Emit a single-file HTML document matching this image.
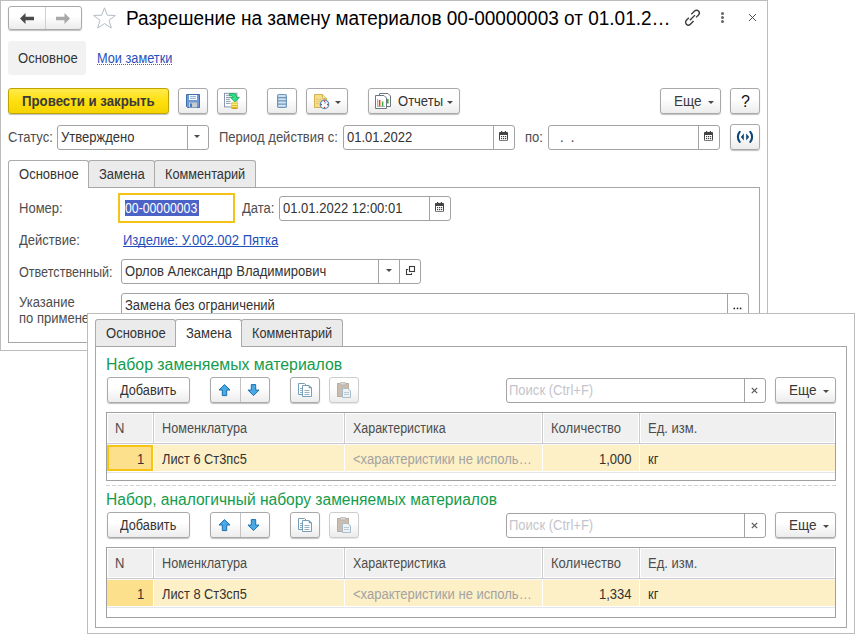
<!DOCTYPE html>
<html><head><meta charset="utf-8">
<style>
*{box-sizing:border-box;margin:0;padding:0}
html,body{width:859px;height:638px;overflow:hidden;background:#fff}
body{font-family:"Liberation Sans",sans-serif;font-size:13px;color:#4d4d4d;position:relative}
.a{position:absolute}
.win{position:absolute;background:#fff;border:1px solid #bcbcbc}
.t{position:absolute;white-space:nowrap;line-height:16px;font-size:14px;transform:scaleX(.93);transform-origin:0 0}
.btn{position:absolute;border:1px solid #a9a9a9;border-radius:3px;background:linear-gradient(#ffffff 40%,#ececec);box-shadow:0 1px 1px rgba(0,0,0,.25)}
.fld{position:absolute;border:1px solid #a3a3a3;border-radius:3px;background:#fff}
.vd{position:absolute;top:0;bottom:0;width:1px;background:#a3a3a3}
.tab{position:absolute;border:1px solid #ababab;border-bottom:none;border-radius:3px 3px 0 0;background:#ebebeb}
.tab.act{background:#fff}
.panel{position:absolute;border:1px solid #a6a6a6;background:#fff}
.arr{position:absolute;width:0;height:0;border-left:3px solid transparent;border-right:3px solid transparent;border-top:3px solid #4a4a4a}
.green{color:#139c4b;font-size:16px}
.th{position:absolute;top:0;height:30px;background:#f0f0f0;border-right:1px solid #dadada}
.tbl{position:absolute;border:1px solid #a0a0a0;background:#fff}
</style></head><body>

<!-- MAIN WINDOW -->
<div class="win" style="left:0;top:0;width:768px;height:351px"></div>

<!-- nav buttons -->
<div class="btn" style="left:8px;top:6px;width:74px;height:24px"></div>
<div class="a" style="left:45px;top:7px;width:1px;height:22px;background:#d0d0d0"></div>
<svg class="a" style="left:8px;top:6px" width="74" height="24" viewBox="0 0 74 24">
 <path d="M12 12.5 L17.5 7 L17.5 10.8 L26 10.8 L26 14.2 L17.5 14.2 L17.5 18 Z" fill="#4a4a4a"/>
 <path d="M62 12.5 L56.5 7 L56.5 10.8 L48 10.8 L48 14.2 L56.5 14.2 L56.5 18 Z" fill="#a8a8a8"/>
</svg>
<!-- star -->
<svg class="a" style="left:92px;top:6px" width="25" height="24" viewBox="0 0 25 24">
 <path d="M12.5 1.8 L15.3 9.2 L23.3 9.5 L17 14.3 L19.3 22 L12.5 17.6 L5.7 22 L8 14.3 L1.7 9.5 L9.7 9.2 Z" fill="none" stroke="#b4bcc4" stroke-width="1"/>
</svg>
<div class="t" style="left:126px;top:7px;font-size:20px;line-height:22px;color:#000;transform:scaleX(.95)">Разрешение на замену материалов 00-00000003 от 01.01.2…</div>
<!-- link icon -->
<svg class="a" style="left:683px;top:9px" width="20" height="19" viewBox="0 0 20 19">
 <g fill="none" stroke="#3c3c3c" stroke-width="1.6" transform="translate(9.45 8.6) scale(.87) translate(-9.45 -8.35)">
  <path d="M8.2 4.5 L11.9 0.8 A3.18 3.18 0 0 1 16.4 5.3 L13.6 8.1"/>
  <path d="M10.7 12.2 L7 15.9 A3.18 3.18 0 0 1 2.5 11.4 L5.3 8.6"/>
  <path d="M6.5 11.5 L12.3 5.5"/>
 </g>
</svg>
<!-- dots -->
<div class="a" style="left:721px;top:12px;width:3px;height:3px;background:#666;border-radius:50%"></div>
<div class="a" style="left:721px;top:16px;width:3px;height:3px;background:#666;border-radius:50%"></div>
<div class="a" style="left:721px;top:20px;width:3px;height:3px;background:#666;border-radius:50%"></div>
<!-- close -->
<svg class="a" style="left:748px;top:13px" width="9" height="9" viewBox="0 0 9 9">
 <path d="M1 1 L8 8 M8 1 L1 8" stroke="#505050" stroke-width="1"/>
</svg>

<!-- Основное / Мои заметки -->
<div class="a" style="left:8px;top:41px;width:78px;height:34px;background:#f2f2f2;border-radius:3px"></div>
<div class="t" style="left:18px;top:50px;color:#333">Основное</div>
<div class="t" style="left:97px;top:50px;color:#1f50bb;transform:scaleX(.91)">Мои заметки</div>
<div class="a" style="left:97px;top:64px;width:75px;height:1px;background:repeating-linear-gradient(90deg,#3a64c0 0 1px,transparent 1px 2px)"></div>

<!-- toolbar -->
<div class="a" style="left:8px;top:88px;width:161px;height:26px;border:1px solid #bfa300;border-radius:3px;background:linear-gradient(#ffea4c,#ffe00e 50%,#f4d300);box-shadow:0 1px 1px rgba(0,0,0,.25)"></div>
<div class="t" style="left:22px;top:93px;font-weight:bold;color:#3a3a3a;transform:scaleX(.945)">Провести и закрыть</div>

<div class="btn" style="left:178px;top:88px;width:30px;height:26px"></div>
<div class="btn" style="left:217px;top:88px;width:30px;height:26px"></div>
<div class="btn" style="left:267px;top:88px;width:30px;height:26px"></div>
<div class="btn" style="left:306px;top:88px;width:42px;height:26px"></div>
<div class="btn" style="left:368px;top:88px;width:92px;height:26px"></div>
<div class="t" style="left:398px;top:93px;color:#333">Отчеты</div>
<div class="arr" style="left:335px;top:101px"></div>
<div class="arr" style="left:447px;top:101px"></div>

<div class="btn" style="left:660px;top:88px;width:61px;height:26px"></div>
<div class="t" style="left:674px;top:93px;color:#3a3a3a;transform:scaleX(.97)">Еще</div>
<div class="arr" style="left:708px;top:101px"></div>
<div class="btn" style="left:730px;top:88px;width:30px;height:26px"></div>

<!-- status row -->
<div class="t" style="left:8px;top:129px">Статус:</div>
<div class="fld" style="left:57px;top:125px;width:152px;height:25px"><div class="vd" style="left:129px"></div></div>
<div class="t" style="left:61px;top:129px;color:#333">Утверждено</div>
<div class="arr" style="left:194px;top:135px"></div>

<div class="t" style="left:219px;top:129px">Период действия с:</div>
<div class="fld" style="left:343px;top:125px;width:172px;height:25px"><div class="vd" style="left:149px"></div></div>
<div class="t" style="left:347px;top:129px;color:#333">01.01.2022</div>
<div class="t" style="left:525px;top:129px">по:</div>
<div class="fld" style="left:548px;top:125px;width:172px;height:25px"><div class="vd" style="left:149px"></div></div>
<div class="t" style="left:560px;top:129px;color:#333">.&nbsp;&nbsp;.</div>
<div class="btn" style="left:730px;top:124px;width:30px;height:26px"></div>

<!-- main tabs -->
<div class="panel" style="left:8px;top:187px;width:752px;height:156px"></div>
<div class="tab" style="left:88px;top:160px;width:67px;height:27px"></div>
<div class="tab" style="left:154px;top:160px;width:102px;height:27px"></div>
<div class="tab act" style="left:8px;top:160px;width:81px;height:28px"></div>
<div class="t" style="left:19px;top:166px;color:#333">Основное</div>
<div class="t" style="left:99px;top:166px;color:#333">Замена</div>
<div class="t" style="left:165px;top:166px;color:#333;transform:scaleX(.91)">Комментарий</div>

<div class="t" style="left:19px;top:200px">Номер:</div>
<div class="a" style="left:118px;top:193px;width:117px;height:30px;border:2px solid #f5c21b"></div>
<div class="a" style="left:125px;top:200px;width:74px;height:16px;background:#4b63c6"></div>
<div class="t" style="left:125px;top:200px;color:#fff;transform:scaleX(.875)">00-00000003</div>
<div class="t" style="left:242px;top:200px">Дата:</div>
<div class="fld" style="left:279px;top:196px;width:172px;height:25px"><div class="vd" style="left:149px"></div></div>
<div class="t" style="left:283px;top:200px;color:#333">01.01.2022 12:00:01</div>

<div class="t" style="left:19px;top:232px">Действие:</div>
<div class="t" style="left:123px;top:232px;color:#1f50bb;text-decoration:underline;text-decoration-skip-ink:none">Изделие: У.002.002 Пятка</div>

<div class="t" style="left:19px;top:264px;transform:scaleX(.9)">Ответственный:</div>
<div class="fld" style="left:121px;top:259px;width:300px;height:25px"><div class="vd" style="left:256px"></div><div class="vd" style="left:277px"></div></div>
<div class="t" style="left:125px;top:263px;color:#333">Орлов Александр Владимирович</div>

<div class="t" style="left:19px;top:294px;line-height:16px">Указание<br>по применению:</div>
<div class="fld" style="left:121px;top:293px;width:628px;height:25px"><div class="vd" style="left:605px"></div></div>
<div class="t" style="left:125px;top:297px;color:#333">Замена без ограничений</div>


<!-- ICONS toolbar -->
<svg class="a" style="left:186px;top:94px" width="14" height="14" viewBox="0 0 14 14">
 <path d="M0.5 0.5 H13.5 V13.5 H1.5 L0.5 12.5 Z" fill="#6b9ad6" stroke="#3f6fae" stroke-width="1"/>
 <rect x="3" y="1" width="8" height="5" fill="#fff"/>
 <path d="M4 2.6 H10 M4 4.4 H10" stroke="#7ea6d8" stroke-width="0.9"/>
 <rect x="3" y="8.5" width="8" height="5" fill="#c8cccc"/>
 <rect x="4" y="9.5" width="2" height="3.5" fill="#4a7ab8"/>
</svg>
<svg class="a" style="left:220px;top:90px" width="24" height="22" viewBox="0 0 24 22">
 <rect x="4.5" y="3.3" width="12.4" height="13.6" fill="#fff" stroke="#8796ad"/>
 <path d="M6 5.3 H10.3 M6 7.4 H10 M6 9.3 H10 M6 11.4 H10.5 M6 13.4 H10.5" stroke="#8a98ae" stroke-width="1"/>
 <ellipse cx="14.55" cy="18" rx="3.4" ry="1" fill="#c89a10"/>
 <rect x="11.2" y="12.6" width="6.7" height="5.5" fill="#e2bb22"/>
 <path d="M11.5 14.5 H17.6 M11.5 16.4 H17.6" stroke="#f8ea7a" stroke-width="1"/>
 <ellipse cx="14.55" cy="12.6" rx="3.35" ry="1.1" fill="#f6e27a"/>
 <path d="M9.6 3.6 H13.2 Q16.6 3.6 16.6 7 V7.4 H19.4 L14.8 11.9 L10.3 7.4 H13.1 Q13.1 5.9 11.9 5.9 H9.6 Z" fill="#2fe48c" stroke="#109a4a" stroke-width="0.75" stroke-linejoin="round"/>
</svg>
<svg class="a" style="left:277px;top:94px" width="10" height="14" viewBox="0 0 10 14">
 <rect x="0" y="0" width="10" height="14" rx="1.8" fill="#7195b8"/>
 <rect x="1.2" y="1.1" width="7.6" height="2" rx=".5" fill="#cde0ef"/>
 <rect x="1.2" y="4.3" width="7.6" height="2" rx=".5" fill="#cde0ef"/>
 <rect x="1.2" y="7.5" width="7.6" height="2" rx=".5" fill="#d2e4f2"/>
 <rect x="1.2" y="10.7" width="7.6" height="2" rx=".5" fill="#d8e8f5"/>
</svg>
<svg class="a" style="left:313px;top:93px" width="17" height="17" viewBox="0 0 17 17">
 <path d="M1.5 1.5 H9.5 L13.5 5.5 V14.5 H1.5 Z" fill="#f4de8e" stroke="#d4b24e" stroke-linejoin="round"/>
 <path d="M9.5 1.5 V4.5 Q9.5 5.5 10.5 5.5 H13.5" fill="#f8e8a8" stroke="#d4b24e"/>
 <path d="M3.2 6.3 H5.3 M6.3 6.3 H8.4 M3.2 8.4 H3.9 M5.4 8.4 H7 M3.2 10.4 H5.3" stroke="#d8bc68" stroke-width="0.9"/>
 <circle cx="11.5" cy="11.4" r="4.2" fill="#fff" stroke="#5d8cbc" stroke-width="1.3"/>
 <path d="M11.5 11.4 V8.6 L13.6 9.4 Z" fill="#9db8dc"/>
 <circle cx="11.5" cy="8.3" r="0.75" fill="#e02828"/><circle cx="11.5" cy="14.5" r="0.75" fill="#e02828"/>
 <circle cx="8.4" cy="11.4" r="0.75" fill="#e02828"/><circle cx="14.6" cy="11.4" r="0.75" fill="#e02828"/>
</svg>
<svg class="a" style="left:375px;top:93px" width="17" height="16" viewBox="0 0 17 16">
 <path d="M4.5 0.5 H13 L15.5 3 V13.5 H4.5 Z" fill="#fff" stroke="#6c7680"/>
 <path d="M0.5 2.5 H9 L11.5 5 V15.5 H0.5 Z" fill="#fff" stroke="#6c7680"/>
 <path d="M2.5 6 V13.5 H10" fill="none" stroke="#8a8f95" stroke-width="0.7"/>
 <rect x="3.8" y="7" width="1.6" height="6" fill="#e8382a"/>
 <rect x="6.8" y="8.5" width="1.6" height="4.5" fill="#3cb43c"/>
 <rect x="12" y="6" width="1.6" height="4.5" fill="#3cb43c"/>
</svg>
<!-- help + sync -->
<div class="t" style="left:741px;top:93px;color:#111;font-size:16px;line-height:18px;transform:none">?</div>
<svg class="a" style="left:736px;top:130px" width="18" height="14" viewBox="0 0 18 14">
 <path d="M3.7 1.9 C1.3 4.6 1.3 9.2 3.7 11.9" fill="none" stroke="#0b4676" stroke-width="2.1" stroke-linecap="round"/>
 <path d="M14.3 1.9 C16.7 4.6 16.7 9.2 14.3 11.9" fill="none" stroke="#0b4676" stroke-width="2.1" stroke-linecap="round"/>
 <path d="M7.8 3.3 L4.9 6.9 L7.8 10.5 Z M10.2 3.3 L13.1 6.9 L10.2 10.5 Z" fill="#0b4676"/>
</svg>
<!-- calendars -->
<svg class="a cal" style="left:499px;top:131px" width="9" height="10" viewBox="0 0 9 10"><use href="#calg"/></svg>
<svg class="a cal" style="left:704px;top:131px" width="9" height="10" viewBox="0 0 9 10"><use href="#calg"/></svg>
<svg class="a cal" style="left:435px;top:202px" width="9" height="10" viewBox="0 0 9 10"><use href="#calg"/></svg>
<svg width="0" height="0" style="position:absolute">
 <defs><g id="calg">
  <rect x="0.5" y="1.5" width="8" height="8.3" rx="1" fill="#fff" stroke="#444"/>
  <rect x="0" y="1" width="9" height="3" rx="1" fill="#444"/>
  <rect x="2" y="0" width="1.2" height="2" fill="#444"/><rect x="5.8" y="0" width="1.2" height="2" fill="#444"/>
  <rect x="2" y="5" width="1.2" height="1.2" fill="#444"/><rect x="4" y="5" width="1.2" height="1.2" fill="#444"/><rect x="6" y="5" width="1.2" height="1.2" fill="#444"/>
  <rect x="2" y="7" width="1.2" height="1.2" fill="#444"/><rect x="4" y="7" width="1.2" height="1.2" fill="#444"/><rect x="6" y="7" width="1.2" height="1.2" fill="#444"/>
 </g></defs>
</svg>
<!-- responsible field icons -->
<div class="arr" style="left:386px;top:269px;border-width:3px 3px 0 3px"></div>
<svg class="a" style="left:405px;top:265px" width="11" height="11" viewBox="0 0 11 11">
 <rect x="4.5" y="1.5" width="5" height="5" fill="none" stroke="#3a3a3a" stroke-width="1.1"/>
 <path d="M3.2 4.5 H1.5 V9.5 H6.5 V8.2" fill="none" stroke="#3a3a3a" stroke-width="1.1"/>
</svg>
<svg class="a" style="left:732px;top:306px" width="11" height="5" viewBox="0 0 11 5"><circle cx="2.3" cy="2.4" r=".85" fill="#222"/><circle cx="5.5" cy="2.4" r=".85" fill="#222"/><circle cx="8.6" cy="2.4" r=".85" fill="#222"/></svg>

<!-- OVERLAY WINDOW -->
<div class="win" style="left:87px;top:313px;width:768px;height:321px"></div>
<div class="panel" style="left:95px;top:346px;width:752px;height:282px"></div>
<div class="tab" style="left:95px;top:319px;width:81px;height:27px"></div>
<div class="tab" style="left:241px;top:319px;width:102px;height:27px"></div>
<div class="tab act" style="left:175px;top:319px;width:67px;height:28px"></div>
<div class="t" style="left:106px;top:325px;color:#333">Основное</div>
<div class="t" style="left:186px;top:325px;color:#333">Замена</div>
<div class="t" style="left:252px;top:325px;color:#333;transform:scaleX(.91)">Комментарий</div>

<!-- section 1 -->
<div class="t green" style="left:106px;top:356px;line-height:18px;transform:scaleX(.99)">Набор заменяемых материалов</div>
<div class="btn" style="left:107px;top:377px;width:83px;height:26px"></div>
<div class="t" style="left:120px;top:382px;color:#333;transform:scaleX(.91)">Добавить</div>
<div class="btn" style="left:210px;top:377px;width:60px;height:26px"></div>
<div class="btn" style="left:290px;top:377px;width:30px;height:26px"></div>
<div class="btn" style="left:329px;top:377px;width:30px;height:26px;border-color:#cdcdcd;box-shadow:0 1px 1px rgba(0,0,0,.1)"></div>
<div class="fld" style="left:506px;top:378px;width:260px;height:25px"><div class="vd" style="left:237px"></div></div>
<div class="t" style="left:509px;top:382px;color:#c4c4cc">Поиск (Ctrl+F)</div>
<div class="btn" style="left:775px;top:377px;width:61px;height:26px"></div>
<div class="t" style="left:789px;top:382px;color:#3a3a3a;transform:scaleX(.97)">Еще</div>
<div class="arr" style="left:823px;top:390px"></div>


<svg class="a" style="left:218px;top:384px" width="13" height="13" viewBox="0 0 13 13">
 <path d="M6.5 0.6 L12 6 H8.7 V11.6 H4.3 V6 H1 Z" fill="#48a9e6" stroke="#1a6eb0" stroke-width="1"/>
</svg>
<div class="a" style="left:240px;top:378px;width:1px;height:24px;background:#c3c3c3"></div>
<svg class="a" style="left:247px;top:384px" width="13" height="13" viewBox="0 0 13 13">
 <path d="M6.5 11.6 L12 6.1 H8.7 V0.6 H4.3 V6.1 H1 Z" fill="#48a9e6" stroke="#1a6eb0" stroke-width="1"/>
</svg>
<svg class="a" style="left:297px;top:382px" width="17" height="16" viewBox="0 0 17 16">
 <path d="M1.5 1.5 H7.5 L9.5 3.5 V12.5 H1.5 Z" fill="#fff" stroke="#769eb6"/>
 <path d="M3 6.5 H6 M3 8.5 H6 M3 10.5 H6" stroke="#86a8bd" stroke-width="0.9"/>
 <path d="M5.5 3.5 H12 L14.5 6 V14.5 H5.5 Z" fill="#fff" stroke="#769eb6"/>
 <path d="M12 3.5 V6 H14.5 Z" fill="#769eb6" stroke="#769eb6" stroke-width=".6"/>
 <path d="M7.5 8.5 H12.5 M7.5 10.5 H12.5 M7.5 12.5 H12.5" stroke="#86a8bd" stroke-width="0.9"/>
</svg>
<svg class="a" style="left:336px;top:382px" width="16" height="16" viewBox="0 0 16 16">
 <rect x="1.5" y="1.5" width="11" height="13" fill="#cbbdad" stroke="#bcae9e"/>
 <rect x="4" y="0.5" width="6" height="2.5" rx="1" fill="#d8d8d8" stroke="#a8a8a8" stroke-width="0.6"/>
 <path d="M6.5 6.5 H12 L14.5 9 V15.5 H6.5 Z" fill="#eef2f5" stroke="#a9bccb"/>
 <path d="M8 10.5 H13 M8 12.5 H13" stroke="#a9bccb" stroke-width="0.8"/>
</svg>
<svg class="a" style="left:751px;top:387px" width="7" height="7" viewBox="0 0 7 7">
 <path d="M0.8 0.8 L6.2 6.2 M6.2 0.8 L0.8 6.2" stroke="#555" stroke-width="1.2"/>
</svg>

<!-- table 1 -->
<div class="tbl" style="left:106px;top:412px;width:730px;height:69px">
 <div class="a" style="left:1px;top:1px;width:44px;height:28px;background:#f0f0f0"></div>
 <div class="a" style="left:48px;top:1px;width:188px;height:28px;background:#f0f0f0"></div>
 <div class="a" style="left:239px;top:1px;width:195px;height:28px;background:#f0f0f0"></div>
 <div class="a" style="left:437px;top:1px;width:94px;height:28px;background:#f0f0f0"></div>
 <div class="a" style="left:534px;top:1px;width:193px;height:28px;background:#f0f0f0"></div>
 <div class="a" style="left:46px;top:0;width:1px;height:31px;background:#cbcbcb"></div>
 <div class="a" style="left:237px;top:0;width:1px;height:31px;background:#cbcbcb"></div>
 <div class="a" style="left:435px;top:0;width:1px;height:31px;background:#cbcbcb"></div>
 <div class="a" style="left:532px;top:0;width:1px;height:31px;background:#cbcbcb"></div>
 <div class="a" style="left:0;top:30px;width:728px;height:1px;background:#cbcbcb"></div>
 <div class="a" style="left:0;top:31px;width:728px;height:1px;background:#f7f8fc"></div>
 <div class="a" style="left:0px;top:32px;width:46px;height:26px;background:#fde08b;border:2px solid #f6c513"></div>
 <div class="a" style="left:47px;top:32px;width:190px;height:26px;background:#fdf0c6"></div>
 <div class="a" style="left:238px;top:32px;width:197px;height:26px;background:#fdf0c6"></div>
 <div class="a" style="left:436px;top:32px;width:96px;height:26px;background:#fdf0c6"></div>
 <div class="a" style="left:533px;top:32px;width:195px;height:26px;background:#fdf0c6"></div>
 <div class="a" style="left:0;top:59px;width:728px;height:1px;background:#e4e5ea"></div>
</div>
<div class="t" style="left:115px;top:420px">N</div>
<div class="t" style="left:162px;top:420px;transform:scaleX(.905)">Номенклатура</div>
<div class="t" style="left:353px;top:420px;transform:scaleX(.89)">Характеристика</div>
<div class="t" style="left:551px;top:420px">Количество</div>
<div class="t" style="left:648px;top:420px">Ед. изм.</div>
<div class="t" style="left:137px;top:451px;color:#333">1</div>
<div class="t" style="left:162px;top:451px;color:#333;transform:scaleX(.915)">Лист 6 Ст3пс5</div>
<div class="t" style="left:353px;top:451px;color:#a3a3a3">&lt;характеристики не исполь…</div>
<div class="t" style="left:599px;top:451px;color:#333">1,000</div>
<div class="t" style="left:648px;top:451px;color:#333">кг</div>

<div class="a" style="left:106px;top:485px;width:730px;height:1px;background:repeating-linear-gradient(90deg,#d0d0d0 0 4px,transparent 4px 6px)"></div>

<!-- section 2 -->
<div class="t green" style="left:106px;top:491px;line-height:18px;transform:scaleX(.973)">Набор, аналогичный набору заменяемых материалов</div>
<div class="btn" style="left:107px;top:512px;width:83px;height:26px"></div>
<div class="t" style="left:120px;top:517px;color:#333;transform:scaleX(.91)">Добавить</div>
<div class="btn" style="left:210px;top:512px;width:60px;height:26px"></div>
<div class="btn" style="left:290px;top:512px;width:30px;height:26px"></div>
<div class="btn" style="left:329px;top:512px;width:30px;height:26px;border-color:#cdcdcd;box-shadow:0 1px 1px rgba(0,0,0,.1)"></div>
<div class="fld" style="left:506px;top:513px;width:260px;height:25px"><div class="vd" style="left:237px"></div></div>
<div class="t" style="left:509px;top:517px;color:#c4c4cc">Поиск (Ctrl+F)</div>
<div class="btn" style="left:775px;top:512px;width:61px;height:26px"></div>
<div class="t" style="left:789px;top:517px;color:#3a3a3a;transform:scaleX(.97)">Еще</div>
<div class="arr" style="left:823px;top:525px"></div>


<svg class="a" style="left:218px;top:519px" width="13" height="13" viewBox="0 0 13 13">
 <path d="M6.5 0.6 L12 6 H8.7 V11.6 H4.3 V6 H1 Z" fill="#48a9e6" stroke="#1a6eb0" stroke-width="1"/>
</svg>
<div class="a" style="left:240px;top:513px;width:1px;height:24px;background:#c3c3c3"></div>
<svg class="a" style="left:247px;top:519px" width="13" height="13" viewBox="0 0 13 13">
 <path d="M6.5 11.6 L12 6.1 H8.7 V0.6 H4.3 V6.1 H1 Z" fill="#48a9e6" stroke="#1a6eb0" stroke-width="1"/>
</svg>
<svg class="a" style="left:297px;top:517px" width="17" height="16" viewBox="0 0 17 16">
 <path d="M1.5 1.5 H7.5 L9.5 3.5 V12.5 H1.5 Z" fill="#fff" stroke="#769eb6"/>
 <path d="M3 6.5 H6 M3 8.5 H6 M3 10.5 H6" stroke="#86a8bd" stroke-width="0.9"/>
 <path d="M5.5 3.5 H12 L14.5 6 V14.5 H5.5 Z" fill="#fff" stroke="#769eb6"/>
 <path d="M12 3.5 V6 H14.5 Z" fill="#769eb6" stroke="#769eb6" stroke-width=".6"/>
 <path d="M7.5 8.5 H12.5 M7.5 10.5 H12.5 M7.5 12.5 H12.5" stroke="#86a8bd" stroke-width="0.9"/>
</svg>
<svg class="a" style="left:336px;top:517px" width="16" height="16" viewBox="0 0 16 16">
 <rect x="1.5" y="1.5" width="11" height="13" fill="#cbbdad" stroke="#bcae9e"/>
 <rect x="4" y="0.5" width="6" height="2.5" rx="1" fill="#d8d8d8" stroke="#a8a8a8" stroke-width="0.6"/>
 <path d="M6.5 6.5 H12 L14.5 9 V15.5 H6.5 Z" fill="#eef2f5" stroke="#a9bccb"/>
 <path d="M8 10.5 H13 M8 12.5 H13" stroke="#a9bccb" stroke-width="0.8"/>
</svg>
<svg class="a" style="left:751px;top:522px" width="7" height="7" viewBox="0 0 7 7">
 <path d="M0.8 0.8 L6.2 6.2 M6.2 0.8 L0.8 6.2" stroke="#555" stroke-width="1.2"/>
</svg>

<!-- table 2 -->
<div class="tbl" style="left:106px;top:547px;width:730px;height:71px">
 <div class="a" style="left:1px;top:1px;width:44px;height:28px;background:#f0f0f0"></div>
 <div class="a" style="left:48px;top:1px;width:188px;height:28px;background:#f0f0f0"></div>
 <div class="a" style="left:239px;top:1px;width:195px;height:28px;background:#f0f0f0"></div>
 <div class="a" style="left:437px;top:1px;width:94px;height:28px;background:#f0f0f0"></div>
 <div class="a" style="left:534px;top:1px;width:193px;height:28px;background:#f0f0f0"></div>
 <div class="a" style="left:46px;top:0;width:1px;height:31px;background:#cbcbcb"></div>
 <div class="a" style="left:237px;top:0;width:1px;height:31px;background:#cbcbcb"></div>
 <div class="a" style="left:435px;top:0;width:1px;height:31px;background:#cbcbcb"></div>
 <div class="a" style="left:532px;top:0;width:1px;height:31px;background:#cbcbcb"></div>
 <div class="a" style="left:0;top:30px;width:728px;height:1px;background:#cbcbcb"></div>
 <div class="a" style="left:0;top:31px;width:728px;height:1px;background:#f7f8fc"></div>
 <div class="a" style="left:0px;top:32px;width:46px;height:26px;background:#fde08b"></div>
 <div class="a" style="left:47px;top:32px;width:190px;height:26px;background:#fdf0c6"></div>
 <div class="a" style="left:238px;top:32px;width:197px;height:26px;background:#fdf0c6"></div>
 <div class="a" style="left:436px;top:32px;width:96px;height:26px;background:#fdf0c6"></div>
 <div class="a" style="left:533px;top:32px;width:195px;height:26px;background:#fdf0c6"></div>
 <div class="a" style="left:0;top:59px;width:728px;height:1px;background:#e4e5ea"></div>
</div>
<div class="t" style="left:115px;top:555px">N</div>
<div class="t" style="left:162px;top:555px;transform:scaleX(.905)">Номенклатура</div>
<div class="t" style="left:353px;top:555px;transform:scaleX(.89)">Характеристика</div>
<div class="t" style="left:551px;top:555px">Количество</div>
<div class="t" style="left:648px;top:555px">Ед. изм.</div>
<div class="t" style="left:137px;top:586px;color:#333">1</div>
<div class="t" style="left:162px;top:586px;color:#333;transform:scaleX(.915)">Лист 8 Ст3сп5</div>
<div class="t" style="left:353px;top:586px;color:#a3a3a3">&lt;характеристики не исполь…</div>
<div class="t" style="left:599px;top:586px;color:#333">1,334</div>
<div class="t" style="left:648px;top:586px;color:#333">кг</div>
</body></html>
